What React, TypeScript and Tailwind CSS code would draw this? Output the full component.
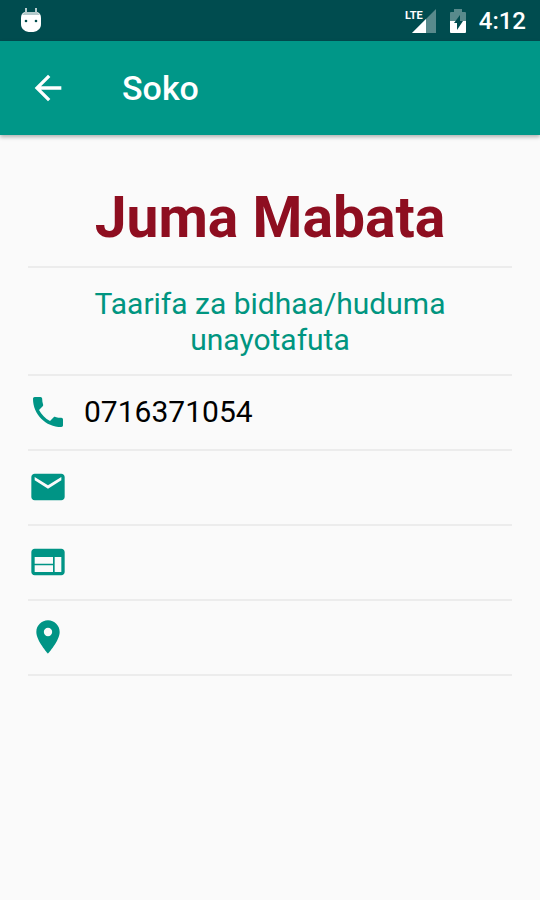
import { MdArrowBack, MdEmail, MdPhone, MdPlace, MdWeb } from "react-icons/md";
import type { IconType } from "react-icons";

type Contact = {
    label: string;
    Icon: IconType;
    value?: string;
    href?: string;
};

const contacts: Contact[] = [
    { label: "Simu", Icon: MdPhone, value: "0716371054", href: "tel:0716371054" },
    { label: "Barua pepe", Icon: MdEmail },
    { label: "Tovuti", Icon: MdWeb },
    { label: "Mahali", Icon: MdPlace },
];

function RobotIcon() {
    return (
        <svg width="22" height="26" viewBox="0 0 22 26" aria-hidden="true">
            <path d="M6 0v5M16 0v5" stroke="#b5cbcc" strokeWidth="2" />
            <path
                d="M5 4h12q4 1 4 6v6q0 4-3 6-2 2-7 2t-7-2q-3-2-3-6v-6q0-5 4-6z"
                fill="#fff"
            />
            <path d="M5 4h12l3 3H2z" fill="#b5cbcc" />
            <circle cx="6" cy="13" r="1.3" fill="#004d4d" />
            <circle cx="16" cy="13" r="1.3" fill="#004d4d" />
        </svg>
    );
}

function SignalIcon() {
    return (
        <svg width="32" height="26" viewBox="0 0 32 26" aria-hidden="true">
            <path d="M31 1v24H7z" fill="#fff" fillOpacity="0.35" />
            <path d="M21 11v14H7z" fill="#fff" />
            {/* keeps the network label clear of the bars */}
            <path d="M0 0h17v13H0z" fill="#004c4f" />
            <text
                x="0"
                y="11"
                fill="#fff"
                className="font-['Liberation_Sans_Narrow',Roboto,sans-serif] text-[11px] font-bold"
            >
                LTE
            </text>
        </svg>
    );
}

function BatteryIcon() {
    return (
        <svg width="18" height="26" viewBox="0 0 18 26" aria-hidden="true">
            <path
                d="M5 1h8v3h3q1 0 1 1v8H1V5q0-1 1-1h3z"
                fill="#fff"
                fillOpacity="0.35"
            />
            <path d="M1 13h16v11q0 1-1 1H2q-1 0-1-1z" fill="#fff" />
            <path d="M11 7v6h3l-6 9v-7H5z" fill="#004c4f" />
        </svg>
    );
}

function StatusBar() {
    return (
        <div className="flex h-[41px] items-center justify-between bg-[#004c4f] pr-3.5 pl-5 text-white">
            <RobotIcon />
            <div className="flex items-center">
                <SignalIcon />
                <span className="mx-3">
                    <BatteryIcon />
                </span>
                <span className="text-2xl font-medium">4:12</span>
            </div>
        </div>
    );
}

export default function App() {
    return (
        <div className="min-h-screen bg-[#fafafa] font-[Roboto,sans-serif] text-black">
            <StatusBar />
            <header className="flex h-[94px] items-center bg-[#009788] pl-7 text-white shadow-[0_2px_4px_rgba(0,0,0,0.3)]">
                <button type="button" aria-label="Rudi">
                    <MdArrowBack size={40} />
                </button>
                <h1 className="ml-[54px] text-[34px] font-medium">Soko</h1>
            </header>

            <main className="px-7 pt-7">
                <h2 className="border-b-2 border-[#ececec] pt-5 pb-[13px] text-center text-[57px] leading-[70px] font-bold text-[#8e0e20]">
                    Juma Mabata
                </h2>
                <p className="border-b-2 border-[#ececec] px-8 pt-[18px] pb-4 text-center text-[30px] leading-9 text-[#009580]">
                    Taarifa za bidhaa/huduma unayotafuta
                </p>
                <ul>
                    {contacts.map(({ label, Icon, value, href }) => (
                        <li
                            key={label}
                            className="flex h-[75px] items-center gap-4 border-b-2 border-[#ececec] pb-0.5 text-[30px]"
                        >
                            <Icon size={40} title={label} className="text-[#009485]" />
                            {value && <a href={href}>{value}</a>}
                        </li>
                    ))}
                </ul>
            </main>
        </div>
    );
}
